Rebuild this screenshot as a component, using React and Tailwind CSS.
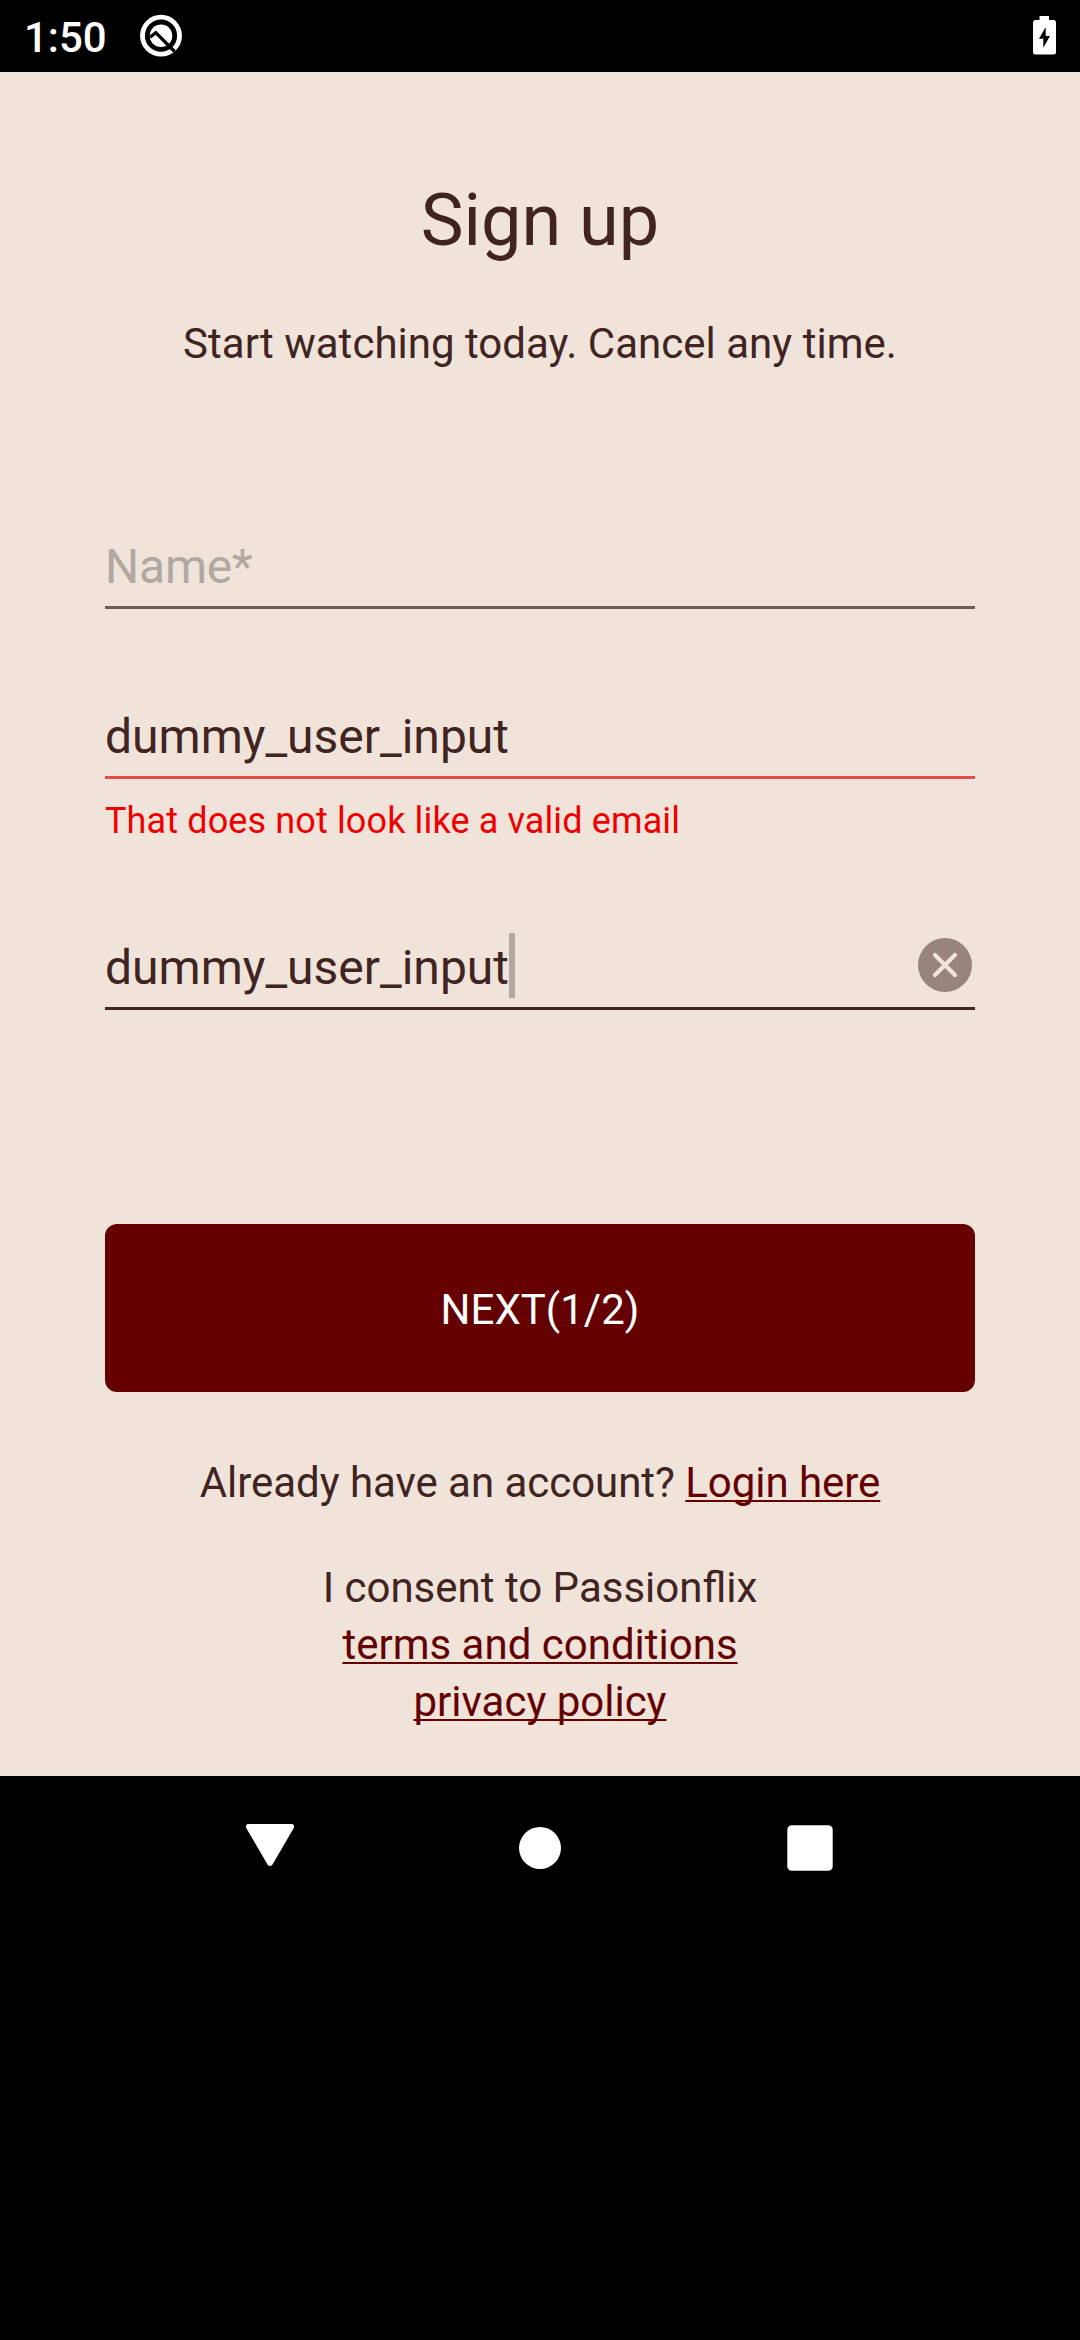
import React from "react";

function StatusBar() {
  return (
    <header className="flex h-[72px] shrink-0 items-center bg-black pl-[24px] pr-[21px] text-white">
      <span className="w-[82px] whitespace-nowrap pt-[3px] text-[42px] font-medium leading-[69px]">1:50</span>
      <svg className="ml-[33px]" width="44" height="44" viewBox="0 0 44 44" fill="none">
        <circle cx="22" cy="21.700" r="18.500" stroke="#fff" strokeWidth="4.800" />
        <circle cx="22" cy="21.700" r="11.300" fill="#fff" />
        <path d="M11 23.300 L16.800 18.700 L35.500 37.500" stroke="#000" strokeWidth="3.300" />
      </svg>
      <svg className="ml-auto" width="30" height="40" viewBox="0 0 30 40">
        <path d="M10.500 0h9.500v4h4.500q2.500 0 2.500 2.500v29.500q0 2.500-2.500 2.500H6.500q-2.500 0-2.500-2.500V6.500q0-2.500 2.500-2.500h4z" fill="#fff" />
        <path d="M16.700 11 10 22.800h4.300v9L21 20h-4.300z" fill="#000" />
      </svg>
    </header>
  );
}

function Field({ className, lineClass, children }) {
  return (
    <div className={`flex h-[71px] items-start border-b-[3px] text-[48px] leading-[56px] ${lineClass} ${className}`}>
      {children}
    </div>
  );
}

function Link({ children }) {
  return (
    <a className="text-[#640000] underline decoration-2 underline-offset-[3px] [text-decoration-skip-ink:none]">
      {children}
    </a>
  );
}

function SignUp() {
  return (
    <main className="flex h-[1704px] shrink-0 flex-col bg-[#efe3da] px-[105px] pt-[107px] text-[42px] text-[#412421]">
      <h1 className="text-center text-[72px] leading-[84px]">Sign up</h1>
      <p className="mt-[56px] text-center leading-[50px] tracking-[0.02px]">Start watching today. Cancel any time.</p>

      <Field className="mt-[169px]" lineClass="border-[#705c56]">
        <span className="pt-px tracking-[-0.2px] text-[#b0a8a1]">Name*</span>
      </Field>
      <Field className="mt-[99px]" lineClass="border-[#e54c47]">
        <span className="pt-px">dummy_user_input</span>
      </Field>
      <p className="mt-[21px] text-[36px] leading-[42px] tracking-[0.13px] text-[#ee0000]">
        That does not look like a valid email
      </p>
      <Field className="mt-[97px]" lineClass="border-[#412421]">
        <span className="pt-px">dummy_user_input</span>
        <span className="-mt-[6px] h-[65px] w-[6px] bg-[#b0a8a1]" />
        <svg className="-mt-px ml-auto mr-[3px]" width="54" height="54" viewBox="0 0 54 54">
          <circle cx="27" cy="27" r="27" fill="#98837e" />
          <path d="M17 17 37 37M37 17 17 37" stroke="#efe3da" strokeWidth="4.200" strokeLinecap="round" />
        </svg>
      </Field>

      <button className="mt-[214px] h-[168px] rounded-[12px] bg-[#640000] pt-[3px] text-white">NEXT(1/2)</button>

      <p className="mt-[62px] text-center leading-[57px] tracking-[-0.04px]">
        Already have an account? <Link>Login here</Link>
      </p>
      <p className="mt-[48px] text-center leading-[57px]">
        I consent to Passionflix
        <br />
        <Link>terms and conditions</Link>
        <br />
        <Link>privacy policy</Link>
      </p>
    </main>
  );
}

function NavBar() {
  return (
    <nav className="flex h-[144px] items-center justify-center gap-[222px]">
      <svg width="48" height="48" viewBox="0 0 48 48">
        <path d="M3 0h42q4.500 0 2.500 4.500L26.500 40.500q-2.500 3-5 0L.5 4.500q-2-4.500 2.500-4.500z" fill="#fff" />
      </svg>
      <svg width="48" height="48" viewBox="0 0 48 48">
        <circle cx="24" cy="24" r="21" fill="#fff" />
      </svg>
      <svg width="48" height="48" viewBox="0 0 48 48">
        <rect x="1.300" y="1.300" width="45.400" height="45.400" rx="4.500" fill="#fff" />
      </svg>
    </nav>
  );
}

export default function App() {
  return (
    <div className="flex h-[2340px] w-[1080px] flex-col overflow-hidden bg-black font-['Roboto',sans-serif]">
      <StatusBar />
      <SignUp />
      <NavBar />
    </div>
  );
}
